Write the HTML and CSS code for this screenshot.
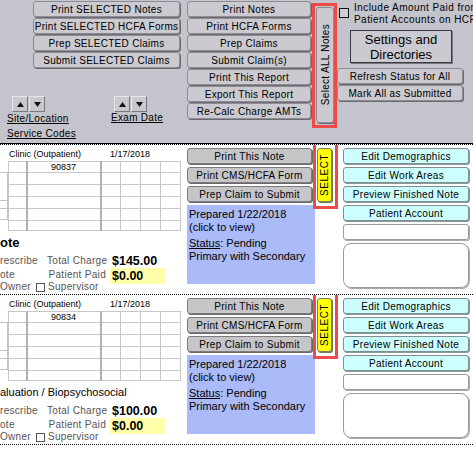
FILE: index.html
```
<!DOCTYPE html>
<html>
<head>
<meta charset="utf-8">
<link rel="stylesheet" href="styles.css">
</head>
<body>
<div class="top">
  <div class="t-left">
    <div class="stack lstack">
      <div class="btn gray">Print SELECTED Notes</div>
      <div class="btn gray">Print SELECTED HCFA Forms</div>
      <div class="btn gray">Prep SELECTED Claims</div>
      <div class="btn gray">Submit SELECTED Claims</div>
    </div>
    <div class="sorts">
      <div class="sg sg1">
        <div class="arrows">
          <span class="arr"><svg width="7" height="5" viewBox="0 0 7 5"><polygon points="3.5,0 7,5 0,5" fill="#111"/></svg></span>
          <span class="arr"><svg width="7" height="5" viewBox="0 0 7 5"><polygon points="0,0 7,0 3.5,5" fill="#111"/></svg></span>
        </div>
        <div class="lnk">Site/Location</div>
        <div class="lnk lnk2">Service Codes</div>
      </div>
      <div class="sg sg2">
        <div class="arrows">
          <span class="arr"><svg width="7" height="5" viewBox="0 0 7 5"><polygon points="3.5,0 7,5 0,5" fill="#111"/></svg></span>
          <span class="arr"><svg width="7" height="5" viewBox="0 0 7 5"><polygon points="0,0 7,0 3.5,5" fill="#111"/></svg></span>
        </div>
        <div class="lnk lnk3">Exam Date</div>
      </div>
    </div>
  </div>
  <div class="t-mid">
    <div class="stack">
      <div class="btn gray">Print Notes</div>
      <div class="btn gray">Print HCFA Forms</div>
      <div class="btn gray">Prep Claims</div>
      <div class="btn gray">Submit Claim(s)</div>
      <div class="btn gray">Print This Report</div>
      <div class="btn gray">Export This Report</div>
      <div class="btn gray">Re-Calc Charge AMTs</div>
    </div>
  </div>
  <div class="t-sel">
    <div class="vbtn gray"><span class="vtext">Select ALL Notes</span></div>
    <div class="redbox rb-top"></div>
  </div>
  <div class="t-right">
    <div class="incl">
      <span class="chk"></span>
      <span class="incl-text">Include Amount Paid from<br>Patient Accounts on HCFA</span>
    </div>
    <div class="settings">Settings and<br>Directories</div>
    <div class="btn gray wide refresh">Refresh Status for All</div>
    <div class="btn gray wide mark">Mark All as Submitted</div>
  </div>
</div>

<div class="row">
  <div class="r-left">
    <div class="rtitle"><span class="rt-a">Clinic (Outpatient)</span><span>1/17/2018</span></div>
    <div class="gridwrap">
      <div class="stub"><div class="s1"></div><div class="s2"></div><div class="s3"></div></div>
      <table class="grid">
        <colgroup><col class="c1"><col class="c2"><col class="c3"><col class="c3"><col class="c3"><col class="c3"></colgroup>
        <tr class="h11"><td></td><td class="code">90837</td><td></td><td></td><td></td><td></td></tr>
        <tr><td></td><td></td><td></td><td></td><td></td><td></td></tr>
        <tr><td></td><td></td><td></td><td></td><td></td><td></td></tr>
        <tr><td></td><td></td><td></td><td></td><td></td><td></td></tr>
        <tr><td></td><td></td><td></td><td></td><td></td><td></td></tr>
        <tr class="h10"><td></td><td></td><td></td><td></td><td></td><td></td></tr>
      </table>
    </div>
    <div class="rname">ote</div>
    <div class="totals">
      <span class="lbl">rescribe</span><span class="lbl rt">Total Charge</span><span class="amt">$145.00</span>
      <span class="lbl">ote</span><span class="lbl rt">Patient Paid</span><span class="paid">$0.00</span>
      <span class="owner lbl">Owner <span class="cb"></span> Supervisor</span>
    </div>
  </div>
  <div class="r-mid">
    <div class="stack gap3">
      <div class="btn dgray">Print This Note</div>
      <div class="btn dgray">Print CMS/HCFA Form</div>
      <div class="btn dgray">Prep Claim to Submit</div>
    </div>
    <div class="status">
      <p>Prepared 1/22/2018<br>(click to view)</p>
      <p><u>Status</u>: Pending<br>Primary with Secondary</p>
    </div>
  </div>
  <div class="r-sel">
    <div class="sbtn"><span class="vtext">SELECT</span></div>
    <div class="redbox rb-row"></div>
  </div>
  <div class="r-right">
    <div class="stack gap3">
      <div class="btn cyan">Edit Demographics</div>
      <div class="btn cyan">Edit Work Areas</div>
      <div class="btn cyan">Preview Finished Note</div>
      <div class="btn cyan">Patient Account</div>
      <div class="wbox"></div>
      <div class="bigbox"></div>
    </div>
  </div>
</div>

<div class="row last">
  <div class="r-left">
    <div class="rtitle"><span class="rt-a">Clinic (Outpatient)</span><span>1/17/2018</span></div>
    <div class="gridwrap">
      <div class="stub"><div class="s1"></div><div class="s2"></div><div class="s3"></div></div>
      <table class="grid">
        <colgroup><col class="c1"><col class="c2"><col class="c3"><col class="c3"><col class="c3"><col class="c3"></colgroup>
        <tr class="h11"><td></td><td class="code">90834</td><td></td><td></td><td></td><td></td></tr>
        <tr><td></td><td></td><td></td><td></td><td></td><td></td></tr>
        <tr><td></td><td></td><td></td><td></td><td></td><td></td></tr>
        <tr><td></td><td></td><td></td><td></td><td></td><td></td></tr>
        <tr><td></td><td></td><td></td><td></td><td></td><td></td></tr>
        <tr class="h10"><td></td><td></td><td></td><td></td><td></td><td></td></tr>
      </table>
    </div>
    <div class="rname reg">aluation / Biopsychosocial</div>
    <div class="totals">
      <span class="lbl">rescribe</span><span class="lbl rt">Total Charge</span><span class="amt">$100.00</span>
      <span class="lbl">ote</span><span class="lbl rt">Patient Paid</span><span class="paid">$0.00</span>
      <span class="owner lbl">Owner <span class="cb"></span> Supervisor</span>
    </div>
  </div>
  <div class="r-mid">
    <div class="stack gap3">
      <div class="btn dgray">Print This Note</div>
      <div class="btn dgray">Print CMS/HCFA Form</div>
      <div class="btn dgray">Prep Claim to Submit</div>
    </div>
    <div class="status">
      <p>Prepared 1/22/2018<br>(click to view)</p>
      <p><u>Status</u>: Pending<br>Primary with Secondary</p>
    </div>
  </div>
  <div class="r-sel">
    <div class="sbtn"><span class="vtext">SELECT</span></div>
    <div class="redbox rb-row"></div>
  </div>
  <div class="r-right">
    <div class="stack gap3">
      <div class="btn cyan">Edit Demographics</div>
      <div class="btn cyan">Edit Work Areas</div>
      <div class="btn cyan">Preview Finished Note</div>
      <div class="btn cyan">Patient Account</div>
      <div class="wbox"></div>
      <div class="bigbox"></div>
    </div>
  </div>
</div>
</body>
</html>
```

FILE: styles.css
```
html, body {
  margin: 0;
  padding: 0;
}
body {
  width: 473px;
  height: 450px;
  overflow: hidden;
  background: #fff;
  font-family: "Liberation Sans", Arial, sans-serif;
  color: #000;
}

/* ---------- header ---------- */
.top {
  height: 143px;
  background: #c4c4cc;
  border-bottom: 1px solid #000;
  display: flex;
  overflow: hidden;
}
.t-left { width: 187px; flex: none; }
.t-mid { width: 124px; flex: none; }
.t-sel { width: 26px; flex: none; position: relative; }
.t-right { flex: 1; padding-left: 0; min-width: 0; }

.stack {
  display: flex;
  flex-direction: column;
  gap: 1px;
  padding-top: 1px;
}
.lstack { margin-left: 33px; width: 147px; }
.gap3 { gap: 3px; padding-top: 3px; }

.btn {
  height: 16px;
  box-sizing: border-box;
  display: flex;
  align-items: center;
  justify-content: center;
  font-size: 10px;
  letter-spacing: 0.3px;
  white-space: nowrap;
  border-radius: 3px;
}
.gray {
  background: #cacad0;
  border: 1px solid #8c8c92;
  box-shadow: 1px 1px 0 #6a6a70;
}
.dgray {
  background: #c6c6c8;
  border: 1px solid #7c7c80;
  box-shadow: 1px 1px 0 #6a6a6e;
  width: 125px;
}
.cyan {
  background: #ccffff;
  border: 1px solid #7f8f8f;
  box-shadow: 1px 1px 0 #8a9a9a;
}

/* sort arrows */
.sorts {
  display: flex;
  margin-top: 28px;
  padding-left: 7px;
}
.sg1 { width: 104px; }
.arrows { display: flex; gap: 1px; padding-left: 5px; }
.sg2 .arrows { padding-left: 3px; }
.arr {
  width: 16px;
  height: 16px;
  box-sizing: border-box;
  background: #c8c8ce;
  border: 1px solid;
  border-color: #e6e6ec #77777d #77777d #e6e6ec;
  display: flex;
  align-items: center;
  justify-content: center;
}
.lnk {
  font-size: 10px;
  letter-spacing: 0.3px;
  line-height: 12px;
  text-decoration: underline;
  margin-top: 1px;
  white-space: nowrap;
}
.lnk2 { margin-top: 3px; }
.lnk3 { margin-top: 0; }

/* select all */
.vbtn {
  margin: 7px 0 0 5px;
  width: 18px;
  height: 116px;
  box-sizing: border-box;
  border-radius: 3px;
  display: flex;
  align-items: center;
  justify-content: center;
}
.vtext {
  writing-mode: vertical-rl;
  transform: rotate(180deg);
  font-size: 10px;
  letter-spacing: 0.3px;
  white-space: nowrap;
}
.redbox {
  position: absolute;
  box-sizing: border-box;
  border: 3px solid #ee4a4a;
  pointer-events: none;
}
.rb-top { left: 1px; top: 3px; width: 25px; height: 125px; }

/* right header */
.incl {
  display: flex;
  gap: 5px;
  padding-left: 2px;
  margin-top: 2px;
}
.chk {
  flex: none;
  width: 10px;
  height: 10px;
  box-sizing: border-box;
  border: 1px solid #111;
  background: #cdcdd3;
  margin-top: 6px;
}
.incl-text {
  font-size: 10px;
  letter-spacing: 0.45px;
  line-height: 12px;
  white-space: nowrap;
}
.settings {
  margin: 4px 0 0 13px;
  width: 102px;
  height: 33px;
  box-sizing: border-box;
  background: #cacad0;
  border: 1px solid #3a3a3e;
  box-shadow: 1px 1px 0 #77777d;
  font-size: 13px;
  line-height: 15px;
  text-align: center;
  padding-top: 1px;
}
.wide { width: 126px; }
.refresh { margin-top: 5px; }
.mark { margin-top: 1px; }

/* ---------- rows ---------- */
.row {
  height: 149px;
  border-top: 1px dotted #000;
  display: flex;
  overflow: hidden;
}
.row.last { border-bottom: 1px dotted #000; }

.r-left { width: 187px; flex: none; overflow: hidden; }
.r-mid { width: 128px; flex: none; }
.r-sel { width: 28px; flex: none; position: relative; }
.r-right { width: 126px; flex: none; }

.rtitle {
  display: flex;
  font-size: 9px;
  line-height: 12px;
  height: 12px;
  margin-top: 3px;
  padding-left: 9px;
  white-space: nowrap;
}
.rt-a { width: 101px; }

.gridwrap { display: flex; margin-top: 1px; }
.stub { width: 9px; flex: none; }
.stub div { border-right: 1px solid #c4c4c4; border-bottom: 1px solid #c4c4c4; width: 7px; }
.stub .s1 { margin-top: 11px; height: 27px; border-top: 1px solid #c4c4c4; }
.stub .s2 { height: 7px; }
.stub .s3 { height: 10px; }

.grid {
  border-collapse: collapse;
  table-layout: fixed;
  width: 172px;
  margin-left: -1px;
}
.grid .c1 { width: 18px; }
.grid .c2 { width: 74px; }
.grid .c3 { width: 20px; }
.grid td {
  border: 1px solid #c8c8c8;
  height: 11px;
  padding: 0;
  font-size: 9px;
  line-height: 10px;
}
.grid tr.h11 td { height: 10px; }
.grid tr.h10 td { height: 9px; }
.grid td:nth-child(2),
.grid td:nth-child(3) { border-left: 2px solid #b0b0b0; }
.grid td.code { text-align: center; }

.rname {
  font-size: 13px;
  font-weight: bold;
  line-height: 17px;
  margin-top: 3px;
  white-space: nowrap;
}
.rname.reg { font-weight: normal; font-size: 11px; }

.totals {
  display: grid;
  grid-template-columns: 47px 61px 60px;
  grid-template-rows: 14px 14px 10px;
  margin-top: 3px;
  align-items: center;
}
.lbl {
  font-size: 10px;
  letter-spacing: 0.3px;
  color: #555;
  white-space: nowrap;
  line-height: 10px;
}
.rt { text-align: right; padding-right: 2px; }
.amt {
  font-size: 12.5px;
  font-weight: bold;
  padding-left: 4px;
  line-height: 13px;
}
.paid {
  margin-left: 2px;
  width: 55px;
  height: 16px;
  align-self: start;
  box-sizing: border-box;
  background: #ffffaa;
  font-size: 12.5px;
  font-weight: bold;
  padding-left: 2px;
  line-height: 16px;
}
.owner {
  grid-column: 1 / 4;
  display: flex;
  align-items: center;
  gap: 3px;
}
.cb {
  width: 9px;
  height: 9px;
  box-sizing: border-box;
  border: 1px solid #555;
  display: inline-block;
  margin-left: 2px;
}

.status {
  margin-top: 3px;
  height: 79px;
  background: #abbaf8;
  padding: 3px 2px 0;
  box-sizing: border-box;
  font-size: 11px;
  line-height: 13px;
}
.status p { margin: 0 0 3px 0; white-space: nowrap; }

.sbtn {
  margin: 3px 0 0 2px;
  width: 15px;
  height: 54px;
  box-sizing: border-box;
  background: #ffff00;
  border: 1px solid #7c7c60;
  box-shadow: 1px 1px 0 #77775a;
  border-radius: 3px;
  display: flex;
  align-items: center;
  justify-content: center;
}
.sbtn .vtext { letter-spacing: 0.5px; }
.rb-row { left: -2px; top: -6px; width: 25px; height: 70px; }

.wbox {
  height: 16px;
  box-sizing: border-box;
  border: 1px solid #9a9a9a;
  border-radius: 3px;
  box-shadow: 1px 1px 0 #aaa;
}
.bigbox {
  height: 45px;
  box-sizing: border-box;
  border: 1px solid #9a9a9a;
  border-radius: 8px;
  box-shadow: 1px 1px 0 #aaa;
}
```
